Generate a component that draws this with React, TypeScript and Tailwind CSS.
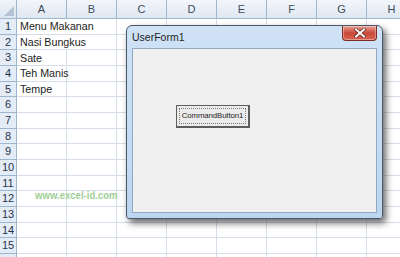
const cols = ["A", "B", "C", "D", "E", "F", "G", "H"];
const data: Record<number, string> = {
  1: "Menu Makanan",
  2: "Nasi Bungkus",
  3: "Sate",
  4: "Teh Manis",
  5: "Tempe",
};
// rows whose text spills over into column B (no gridline under the text)
const spills = [1, 2];

function HeaderRow() {
  return (
    <div className="flex h-[19px] shrink-0">
      <div className="flex w-[17px] shrink-0 items-end justify-end border-b border-r border-[#9eb6ce] bg-gradient-to-b from-[#f1f5fa] to-[#dce5f0] p-[2px]">
        <svg width="10" height="10" viewBox="0 0 10 10">
          <polygon points="10,0 10,10 0,10" fill="#b4c3d5" />
        </svg>
      </div>
      {cols.map((c) => (
        <div
          key={c}
          className="flex w-[50px] shrink-0 items-end justify-center border-b border-r border-[#9eb6ce] bg-gradient-to-b from-[#f3f6fb] to-[#dfe7f1] pb-[1px] text-[11px] text-[#3f4a58]"
        >
          {c}
        </div>
      ))}
    </div>
  );
}

function Row({ n, label = true }: { n: number; label?: boolean }) {
  const text = data[n];
  return (
    <div className="flex h-[15.67px] shrink-0">
      <div className="flex w-[17px] shrink-0 items-center justify-center border-b border-r border-[#9eb6ce] bg-[#e4ecf7] text-[11px] text-[#24354a]">
        {label ? n : null}
      </div>
      {cols.map((c) => (
        <div
          key={c}
          className={`flex w-[50px] shrink-0 items-center border-b border-[#d8dee9] ${
            c === "A" && spills.includes(n) ? "border-r-0 pr-[1px]" : "border-r"
          }`}
        >
          {c === "A" && text ? (
            <span className="whitespace-nowrap pl-[3px] text-[10.7px] text-[#1d1d1d]">{text}</span>
          ) : null}
        </div>
      ))}
    </div>
  );
}

function CloseButton() {
  return (
    <div className="flex h-[15px] w-[35px] items-center justify-center rounded-b-[4px] border border-t-0 border-[#7b2b22] bg-gradient-to-b from-[#e9a295] via-[#c9483a] to-[#d9634f] shadow-[inset_0_0_0_1px_rgba(255,255,255,0.35)]">
      <svg width="12" height="10" viewBox="0 0 12 10">
        <path d="M2 1.5 L10 8.5 M10 1.5 L2 8.5" stroke="#5a1a12" strokeWidth="3.4" strokeLinecap="square" />
        <path d="M2 1.5 L10 8.5 M10 1.5 L2 8.5" stroke="#ffffff" strokeWidth="2" strokeLinecap="square" />
      </svg>
    </div>
  );
}

function UserForm() {
  return (
    <div className="absolute left-[126px] top-[25px] flex h-[194px] w-[257px] flex-col rounded-t-[6px] rounded-b-[3px] border border-[#4a5869] bg-gradient-to-b from-[#cfe2f6] to-[#bcd6f1] px-[5px] pb-[5px] shadow-[3px_4px_7px_rgba(0,0,0,0.6)]">
      <div className="flex h-[22px] shrink-0 items-start justify-between">
        <span className="pt-[4px] text-[10.5px] text-[#1e1e1e]">UserForm1</span>
        <CloseButton />
      </div>
      <div className="flex-1 border border-[#93a9c1] bg-[#f0f0f0] pl-[43px] pt-[56px]">
        <div className="flex h-[23px] w-[74px] items-center justify-center border border-b-2 border-r-2 border-[#5e5e5e] bg-[#ececec] p-[2px]">
          <div className="flex h-full w-full items-center justify-center border border-dotted border-[#7a7a7a] text-[7.8px] tracking-[-0.1px] text-[#222]">
            CommandButton1
          </div>
        </div>
      </div>
    </div>
  );
}

export default function App() {
  return (
    <div className="relative h-[257px] w-[400px] overflow-hidden bg-white font-['Liberation_Sans',Arial,sans-serif]">
      <HeaderRow />
      {Array.from({ length: 15 }, (_, i) => (
        <Row key={i} n={i + 1} />
      ))}
      <Row n={16} label={false} />
      <span className="absolute left-[35px] top-[187px] origin-left scale-x-[0.87] whitespace-nowrap text-[11px] font-bold text-[#9fcf98]">
        www.excel-id.com
      </span>
      <UserForm />
    </div>
  );
}
